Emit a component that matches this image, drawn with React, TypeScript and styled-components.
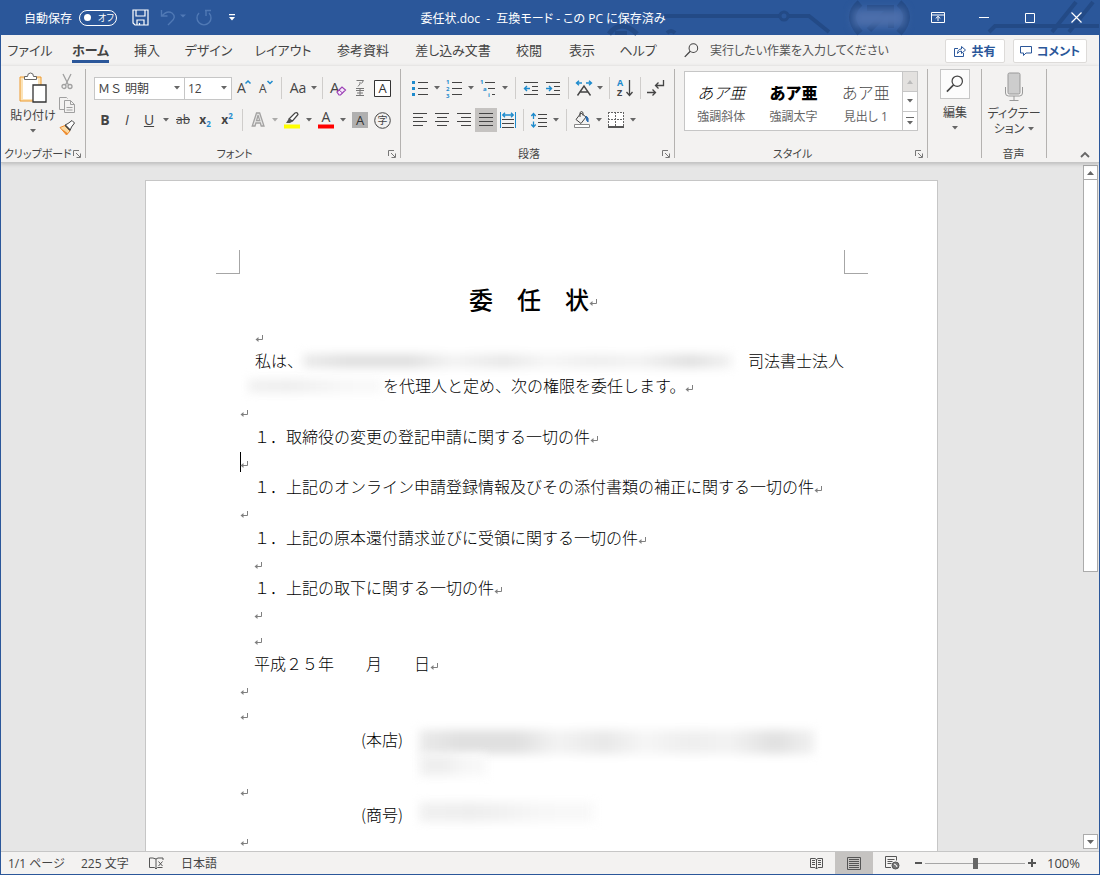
import React from 'react';
import styled, { createGlobalStyle, css } from 'styled-components';

const color = {
  brand: '#2b579a',
  brandDark: '#234a86',
  ribbon: '#f3f2f1',
  canvas: '#e6e6e6',
  line: '#c6c6c6',
  divider: '#b4b2b0',
  text: '#444444',
  accent: '#1e8bcd',
  pressed: '#c5c3c1',
};

const GlobalStyle = createGlobalStyle`
  *, *::before, *::after { box-sizing: border-box; }
  body { margin: 0; }
  body, button, input, select {
    font-family: "Open Sans", "Noto Sans CJK JP", sans-serif;
    font-size: 12px;
    color: ${color.text};
    font-feature-settings: "palt";
  }
  button { padding: 0; border: 0; background: none; }
  svg { display: block; flex: none; overflow: visible; }
`;

const Window = styled.div`
  display: flex;
  flex-direction: column;
  height: 100vh;
  border: 1px solid ${color.brand};
  border-top: 0;
  background: ${color.ribbon};
  overflow: hidden;
`;

/* ---------- title bar ---------- */

const TitleBar = styled.header`
  position: relative;
  display: grid;
  grid-template-columns: 1fr auto 1fr;
  align-items: center;
  flex: none;
  height: 35px;
  background: ${color.brand};
  color: #ffffff;
`;

const TitleArt = styled.svg`
  position: absolute;
  top: 0;
  right: 0;
`;

const QuickAccess = styled.div`
  display: flex;
  align-items: center;
  padding-left: 23px;
`;

const AutoSave = styled.label`
  display: flex;
  align-items: center;
  gap: 7px;
  margin-right: 11px;
`;

const Pill = styled.span`
  display: flex;
  align-items: center;
  gap: 7px;
  width: 38px;
  height: 16px;
  padding-left: 4px;
  border: 1px solid #ffffff;
  border-radius: 8px;
  font-size: 9px;
  line-height: 14px;
  white-space: nowrap;
`;

const PillDot = styled.input`
  appearance: none;
  width: 7px;
  height: 7px;
  margin: 0;
  border-radius: 50%;
  background: #ffffff;
`;

const QuickButton = styled.button<{ $width: number; $dim?: boolean }>`
  display: flex;
  align-items: center;
  justify-content: center;
  width: ${(p) => p.$width}px;
  height: 28px;
  color: ${(p) => (p.$dim ? '#5079b5' : '#ffffff')};
`;

const DocumentName = styled.h1`
  position: relative;
  margin: 0;
  padding-right: 14px;
  font-size: 12px;
  font-weight: 400;
  white-space: pre;
`;

const WindowControls = styled.div`
  position: relative;
  display: flex;
  align-items: center;
  justify-content: flex-end;
`;

const AccountBlur = styled.span`
  width: 52px;
  height: 18px;
  margin-right: 10px;
  background: #4d6fab;
  filter: blur(4px);
`;

const ControlButton = styled.button`
  display: flex;
  align-items: center;
  justify-content: center;
  width: 46px;
  height: 35px;
  color: #ffffff;
`;

/* ---------- tabs ---------- */

const TabBar = styled.nav`
  display: flex;
  align-items: center;
  flex: none;
  height: 31px;
  padding-right: 12px;
`;

const Tab = styled.button<{ $width: number; $active?: boolean }>`
  display: flex;
  justify-content: center;
  width: ${(p) => p.$width}px;
  height: 31px;
  font-size: 13px;
  line-height: 30px;
  white-space: nowrap;
  span { height: 28px; border-bottom: 3px solid transparent; }
  ${(p) =>
    p.$active &&
    css`
      font-weight: 700;
      span { border-bottom-color: ${color.brand}; }
    `}
`;

const TellMe = styled.label`
  display: flex;
  align-items: center;
  flex: 1;
  gap: 11px;
  padding-left: 15px;
`;

const TellMeInput = styled.input`
  flex: 1;
  min-width: 0;
  padding: 0;
  border: 0;
  background: none;
  line-height: 20px;
  outline: 0;
  &::placeholder { color: #555555; opacity: 1; }
`;

const ShareButton = styled.button<{ $width: number }>`
  display: flex;
  align-items: center;
  justify-content: center;
  gap: 5px;
  width: ${(p) => p.$width}px;
  height: 24px;
  margin-left: 8px;
  border: 1px solid #dddbd9;
  border-radius: 2px;
  background: #ffffff;
  color: ${color.brand};
  font-weight: 700;
  white-space: nowrap;
`;

/* ---------- ribbon ---------- */

const Ribbon = styled.div`
  position: relative;
  display: flex;
  flex: none;
  height: 97px;
  border-bottom: 1px solid ${color.line};
  box-shadow: 0 1px 4px rgba(0, 0, 0, 0.2);
`;

const GroupBox = styled.section<{ $width: number }>`
  display: flex;
  flex-direction: column;
  width: ${(p) => p.$width}px;
  margin: 3px 0 4px;
  padding-top: 3px;
  border-right: 1px solid ${color.divider};
`;

const GroupFooter = styled.div<{ $launcher?: boolean }>`
  display: flex;
  align-items: center;
  height: 16px;
  margin: auto 0 -4px;
  padding: 0 4px 0 3px;
  line-height: 16px;
  h2 {
    flex: 1;
    min-width: 0;
    margin: 0;
    padding-right: ${(p) => (p.$launcher ? 8 : 0)}px;
    font-size: 11px;
    font-weight: 400;
    text-align: center;
    white-space: nowrap;
  }
`;

const ToolRow = styled.div`
  display: flex;
  align-items: center;
  height: 32px;
  padding-left: 8px;
`;

const Tool = styled.button<{ $width?: number; $pressed?: boolean; $faded?: boolean }>`
  display: flex;
  align-items: center;
  width: ${(p) => p.$width ?? 22}px;
  height: 24px;
  background: ${(p) => (p.$pressed ? color.pressed : 'none')};
  opacity: ${(p) => (p.$faded ? 0.5 : 1)};
`;

const ToolFace = styled.span<{ $wide?: boolean }>`
  display: flex;
  align-items: center;
  justify-content: center;
  width: ${(p) => (p.$wide ? 24 : 22)}px;
  flex: none;
`;

const CaretSlot = styled.span`
  display: flex;
  flex: 1;
  justify-content: center;
`;

const ToolSeparator = styled.span`
  width: 1px;
  height: 22px;
  margin: 0 4px;
  background: #cfcdcb;
`;

const Letter = styled.span<{ $bold?: boolean; $italic?: boolean; $line?: string; $size?: number }>`
  font-family: "Open Sans", sans-serif;
  font-size: ${(p) => p.$size ?? 14}px;
  line-height: 18px;
  font-weight: ${(p) => (p.$bold ? 700 : 400)};
  font-style: ${(p) => (p.$italic ? 'italic' : 'normal')};
  text-decoration: ${(p) => p.$line ?? 'none'};
  sub, sup { color: ${color.accent}; font-size: 8px; line-height: 8px; }
`;

const ComboPair = styled.div`
  display: flex;
  margin-right: 2px;
`;

const Combo = styled.span<{ $width: number }>`
  display: grid;
  align-items: center;
  width: ${(p) => p.$width}px;
  height: 23px;
  margin-right: -1px;
  border: 1px solid ${color.line};
  background: #ffffff;
  > * { grid-area: 1 / 1; }
  > svg { justify-self: end; margin-right: 4px; pointer-events: none; }
`;

const ComboSelect = styled.select`
  appearance: none;
  width: 100%;
  height: 21px;
  padding: 0 3px;
  border: 0;
  background: none;
  font-feature-settings: normal;
`;

const ClipboardRow = styled.div`
  display: flex;
  padding-left: 6px;
`;

const BigButton = styled.button<{ $width: number }>`
  display: flex;
  flex-direction: column;
  align-items: center;
  width: ${(p) => p.$width}px;
  line-height: 15px;
  white-space: nowrap;
`;

const SmallColumn = styled.div`
  display: flex;
  flex-direction: column;
  margin-top: -2px;
  button { width: 16px; height: 23px; display: flex; align-items: center; justify-content: center; }
`;

const Gallery = styled.div`
  display: flex;
  height: 60px;
  margin: -1px 9px 0 9px;
  border: 1px solid ${color.line};
  background: #ffffff;
`;

const StyleCell = styled.button`
  display: flex;
  flex-direction: column;
  align-items: center;
  flex: 1;
  padding-top: 9px;
  color: #666666;
  line-height: 24px;
  white-space: nowrap;
`;

const StyleSample = styled.span<{ $kind: 'italic' | 'bold' | 'heading' }>`
  color: ${(p) => (p.$kind === 'heading' ? '#4a4a4a' : '#000000')};
  font-size: 16px;
  line-height: 24px;
  font-feature-settings: normal;
  font-style: ${(p) => (p.$kind === 'italic' ? 'italic' : 'normal')};
  font-weight: ${(p) => (p.$kind === 'bold' ? 900 : 300)};
`;

const GalleryScroll = styled.div`
  display: grid;
  grid-template-rows: 1fr 1fr 1fr;
  width: 15px;
  border-left: 1px solid ${color.line};
  button { display: flex; align-items: center; justify-content: center; }
  button + button { border-top: 1px solid ${color.line}; }
  button:first-child { background: #e3e1df; }
`;

const FindBox = styled.span`
  display: flex;
  align-items: center;
  justify-content: center;
  width: 30px;
  height: 30px;
  margin: -3px 0 6px;
  border: 1px solid ${color.line};
  background: #fcfcfc;
`;

const CaptionLine = styled.span`
  display: flex;
  align-items: center;
  gap: 4px;
  height: 15px;
`;

const BigFace = styled.span`
  display: flex;
  justify-content: center;
  margin-bottom: 4px;
`;

const CollapseCorner = styled.div`
  display: flex;
  flex: 1;
  align-items: flex-end;
  justify-content: flex-end;
  padding: 0 9px 4px;
`;

/* ---------- document ---------- */

const Workspace = styled.main`
  display: flex;
  flex: 1;
  min-height: 0;
  background: ${color.canvas};
`;

const Canvas = styled.div`
  flex: 1;
  min-width: 0;
  padding-top: 17px;
  overflow: hidden;
`;

const Page = styled.article`
  width: 793px;
  min-height: 1122px;
  margin: 0 auto;
  padding: 69px 69px 0 70px;
  border: 1px solid ${color.line};
  background: #ffffff;
  color: #000000;
`;

const CropMarks = styled.div`
  display: flex;
  justify-content: space-between;
  &::before, &::after {
    content: "";
    width: 24px;
    height: 24px;
    border: solid #a6a6a6;
    border-width: 0 1px 1px 0;
  }
  &::after { border-width: 0 0 1px 1px; }
`;

const TextArea = styled.div`
  display: grid;
  gap: 1px;
  padding: 0 24px;
  font-family: "Noto Sans CJK JP", sans-serif;
  font-size: 16px;
  font-weight: 300;
  font-feature-settings: normal;
`;

const DocTitle = styled.h2`
  display: flex;
  align-items: center;
  justify-content: center;
  margin: 10px 0 7px;
  padding-right: 17px;
  font-size: 24px;
  font-weight: 500;
  line-height: 32px;
  white-space: pre;
`;

const Line = styled.p<{ $indent?: number }>`
  display: flex;
  align-items: center;
  height: 25px;
  margin: 0;
  padding-left: ${(p) => p.$indent ?? 0}px;
  line-height: 25px;
  white-space: pre;
`;

const Caret = styled.span`
  width: 1px;
  height: 20px;
  margin-right: -1px;
  background: #000000;
`;

const ReturnMark = styled.svg`
  margin-top: 5px;
`;

const Redaction = styled.span<{ $width: number; $height: number; $soft?: boolean }>`
  width: ${(p) => p.$width}px;
  height: ${(p) => p.$height}px;
  background: ${(p) =>
    p.$soft
      ? 'linear-gradient(90deg, #f1f1f1, #eeeeee 30%, #f7f7f7 70%, #f9f9f9)'
      : 'linear-gradient(90deg, #ebebeb 0, #e0e0e0 10%, #e0e0e0 25%, #f3f3f3 35%, #e8e8e8 47%, #f6f6f6 57%, #eeeeee 68%, #f3f3f3 78%, #e0e0e0 90%, #f2f2f2)'};
  filter: blur(5px);
`;

const Party = styled.div<{ $rows: number }>`
  display: flex;
  gap: 16px;
  height: ${(p) => p.$rows * 25}px;
  padding-left: 121px;
`;

const PartyLines = styled.div`
  display: grid;
  align-content: start;
  padding-top: 3px;
`;

const ScrollBar = styled.div`
  display: flex;
  flex-direction: column;
  width: 17px;
  padding: 2px 1px;
  button {
    display: flex;
    align-items: center;
    justify-content: center;
    height: 15px;
    border: 1px solid #ababab;
    background: #ffffff;
  }
`;

const ScrollTrack = styled.div`
  flex: 1;
  &::before {
    content: "";
    display: block;
    height: 60%;
    border: 1px solid #ababab;
    border-top: 0;
    background: #ffffff;
  }
`;

/* ---------- status bar ---------- */

const StatusBar = styled.footer`
  display: flex;
  align-items: center;
  flex: none;
  height: 23px;
  padding: 0 17px 0 7px;
  border-top: 1px solid ${color.line};
  line-height: 20px;
  white-space: nowrap;
`;

const StatusItem = styled.button<{ $width: number }>`
  width: ${(p) => p.$width}px;
  text-align: left;
`;

const StatusSpacer = styled.span`
  flex: 1;
`;

const ViewButton = styled.button<{ $active?: boolean }>`
  display: flex;
  align-items: center;
  justify-content: center;
  width: 38px;
  height: 22px;
  background: ${(p) => (p.$active ? color.pressed : 'none')};
`;

const ZoomStep = styled.button`
  display: flex;
  align-items: center;
  justify-content: center;
  width: 14px;
  height: 20px;
`;

const ZoomSlider = styled.input`
  appearance: none;
  width: 100px;
  height: 12px;
  margin: 0;
  background: linear-gradient(#a6a6a6, #a6a6a6) center / 100% 1px no-repeat;
  &::-webkit-slider-thumb {
    appearance: none;
    width: 5px;
    height: 11px;
    background: #666666;
  }
`;

const ZoomValue = styled.button`
  width: 43px;
  padding-left: 8px;
  font-size: 13px;
  text-align: left;
`;

/* ---------- drawings ---------- */

const Down = () => (
  <svg width="6" height="4" viewBox="0 0 6 4"><path d="M0 0h6L3 3.4z" fill="#666" /></svg>
);

const Launcher = () => (
  <svg width="8" height="8" viewBox="0 0 8 8" fill="none" stroke="#777">
    <path d="M.5 6V.5H6M3 3l4 4M7.5 3.5v4h-4" />
  </svg>
);

const Return = () => (
  <ReturnMark width="9" height="9" viewBox="0 0 9 9" fill="none" stroke="#808080">
    <path d="M7.5 1v4.5H2" />
    <path d="M3.500 3v5L.5 5.500z" fill="#808080" stroke="none" />
  </ReturnMark>
);

const Magnifier = ({ size = 16 }: { size?: number }) => (
  <svg width={size} height={size} viewBox="0 0 16 16" fill="none" stroke="#444" strokeWidth="1.1">
    <circle cx="10" cy="5.500" r="4.600" />
    <path d="M6.700 8.800L.8 14.800" strokeWidth="1.400" />
  </svg>
);

type Bar = [number, number, number];
const Bars = ({ rows, children }: { rows: Bar[]; children?: React.ReactNode }) => (
  <svg width="16" height="16" viewBox="0 0 16 16" fill="none" stroke="#444">
    {rows.map(([x, y, w]) => <path key={`${x}-${y}`} d={`M${x} ${y}.5h${w}`} />)}
    {children}
  </svg>
);

const iconText = { fontFamily: '"Open Sans", sans-serif', fontWeight: 700, fill: color.accent, stroke: 'none' };

const Bullets = () => (
  <Bars rows={[[6, 2, 10], [6, 8, 10], [6, 14, 10]]}>
    <path d="M0 1h3v3H0zM0 7h3v3H0zM0 13h3v3H0z" fill={color.accent} stroke="none" />
  </Bars>
);
const Numbers = () => (
  <Bars rows={[[6, 2, 10], [6, 8, 10], [6, 14, 10]]}>
    <g fontSize="6" {...iconText}><text x="0" y="4">1</text><text x="0" y="11">2</text><text x="0" y="18">3</text></g>
  </Bars>
);
const MultiLevel = () => (
  <Bars rows={[[5, 2, 10], [8, 8, 7], [12, 14, 3]]}>
    <g fontSize="6" {...iconText}><text x="0" y="4">1</text><text x="3" y="11">a</text><text x="8" y="17">i</text></g>
  </Bars>
);
const IndentIcon = ({ outward }: { outward?: boolean }) => (
  <Bars rows={[[1, 2, 14], [9, 6, 6], [9, 10, 6], [1, 14, 14]]}>
    <path d={outward ? 'M7 8.500H1.500M4 6L1.500 8.500L4 11' : 'M1 8.500h5.500M4 6l2.500 2.500L4 11'} stroke={color.accent} strokeWidth="1.400" />
  </Bars>
);
const ScaleIcon = () => (
  <svg width="18" height="16" viewBox="0 0 18 16" fill="none" stroke="#444" strokeWidth="1.400">
    <path d="M2.500 15.500L9 6l6.500 9.500M5 12h8" />
    <path d="M7 3H1.500M4 .7L1.500 3L4 5.300M11 3h5.500M14 .7L16.500 3L14 5.300" stroke={color.accent} />
  </svg>
);
const SortIcon = () => (
  <svg width="18" height="18" viewBox="0 0 18 18" fill="none" stroke="#444" strokeWidth="1.300">
    <g fontSize="9" {...iconText}><text x="1" y="7">A</text><text x="1" y="17" fill="#444">Z</text></g>
    <path d="M13.500 1v15M10.500 13l3 3.500l3-3.500" />
  </svg>
);
const MarksIcon = () => (
  <svg width="18" height="16" viewBox="0 0 18 16" fill="none" stroke="#444" strokeWidth="1.300">
    <path d="M16.500 0v5.500H9M11.500 2.500L8.500 5.500l3 3M0 12.500h8M5.500 9.500l3 3l-3 3" />
  </svg>
);
const DistributeIcon = () => (
  <Bars rows={[[2, 7, 12], [2, 11, 12], [2, 15, 12]]}>
    <path d="M.5 0v16M15.500 0v16" stroke={color.accent} />
    <path d="M3 3h10M5 .7L2.700 3L5 5.300M11 .7L13.300 3L11 5.300" stroke={color.accent} strokeWidth="1.300" />
  </Bars>
);
const SpacingIcon = () => (
  <Bars rows={[[7, 2, 9], [7, 6, 9], [7, 10, 9], [7, 14, 9]]}>
    <path d="M2.500 1.500v5.500M.3 4l2.200-2.500L4.700 4M2.500 9.500V15M.3 12.500L2.500 15l2.200-2.500" stroke={color.accent} strokeWidth="1.300" />
  </Bars>
);
const BucketIcon = () => (
  <svg width="18" height="18" viewBox="0 0 18 18" fill="none" stroke="#444">
    <path d="M8 2L3 8.500l5 4l5-6.500zM7 6V1.500q1.500-2 3 0V4.500" />
    <path d="M13 5q3 1 2 6q-2-1-2-6z" fill="#2b6cb0" stroke="#2b6cb0" />
    <path d="M1.500 13.500h15v3h-15z" stroke="#888" fill="#fff" />
  </svg>
);
const BordersIcon = () => (
  <svg width="16" height="16" viewBox="0 0 16 16" fill="none" stroke="#666">
    <path d="M.5.500h15v13.500H.5z" fill="#fff" stroke="none" />
    <path d="M.5 0v14M15.500 0v14M7.500 0v14M0 .5h16M0 7.500h16" strokeDasharray="2 1" />
    <path d="M0 15h16" stroke="#222" strokeWidth="1.500" />
  </svg>
);

const PasteIcon = () => (
  <svg width="28" height="32" viewBox="0 0 28 32" fill="none">
    <path d="M1 5h21v24H1z" fill="#fbe3b8" stroke="#ee9a2d" />
    <path d="M4 7h15v20H4z" fill="#fff" />
    <path d="M5.500 7.500v-3h3q0-3.500 3-3.500t3 3.500h3v3z" fill="#fff" stroke="#666" />
    <path d="M14 13h13v17H14z" fill="#fff" stroke="#333" strokeWidth="1.300" />
  </svg>
);
const CutIcon = () => (
  <svg width="12" height="16" viewBox="0 0 12 16" fill="none" stroke="#a0a0a0" strokeWidth="1.300">
    <path d="M2 0l5.500 11M10 0L4.500 11" />
    <circle cx="3" cy="12.500" r="2" /><circle cx="9" cy="12.500" r="2" />
  </svg>
);
const CopyIcon = () => (
  <svg width="16" height="16" viewBox="0 0 16 16" fill="none" stroke="#a0a0a0">
    <path d="M5 12.500H.5V.5h7l1 1M5.500 3.500h6l4 4v8h-10zM11.500 3.500v4h4M7.500 10.500h6M7.500 13h6" />
  </svg>
);
const BrushIcon = () => (
  <svg width="16" height="16" viewBox="0 0 16 16">
    <path d="M1 7.500l5-2l5 5.500l-3.500 4z" fill="#fbd9a0" stroke="#ee8a2d" />
    <path d="M3 9l6 4.500L7.500 15z" fill="#ee8a2d" />
    <path d="M6 5l3-1.500l4-3L15.500 3l-3 4L11 10.500z" fill="#fff" stroke="#444" />
    <path d="M6.500 5.500l4.500 4.500" stroke="#444" strokeWidth="1.600" />
  </svg>
);
const ResizeLetter = ({ up }: { up?: boolean }) => (
  <svg width="16" height="20" viewBox="0 0 16 20">
    <text x="1" y="15" fontSize={up ? 14 : 12} fontFamily='"Open Sans", sans-serif' fill="#444">A</text>
    <path d={up ? 'M9.500 5.500L12 3l2.500 2.500' : 'M9.500 3L12 5.500L14.500 3'} stroke={color.accent} strokeWidth="1.500" fill="none" />
  </svg>
);
const ClearIcon = () => (
  <svg width="18" height="20" viewBox="0 0 18 20">
    <text x="1" y="15" fontSize="15" fontFamily='"Open Sans", sans-serif' fill="#444">A</text>
    <path d="M8 14l5-5l3.500 3l-5 5H10z" fill="#f6eafa" stroke="#9b3fb5" strokeWidth="1.200" />
    <path d="M10 12l3.500 3" stroke="#9b3fb5" />
  </svg>
);
const RubyIcon = () => (
  <svg width="14" height="18" viewBox="0 0 14 18" fill="none" stroke="#777">
    <path d="M3.500 1.500h7l-2 3M7 3v2l-2 2.500M3 9.500h8M3 11.500h8M4 14h6M3 16.500h8M7 9v8" />
  </svg>
);
const BoxedA = () => (
  <svg width="17" height="17" viewBox="0 0 17 17">
    <path d="M.5.5h16v16H.5z" fill="#fff" stroke="#333" />
    <text x="8.500" y="13" fontSize="13" textAnchor="middle" fontFamily='"Open Sans", sans-serif' fill="#333">A</text>
  </svg>
);
const ShadedA = () => (
  <svg width="16" height="16" viewBox="0 0 16 16">
    <path d="M0 0h16v16H0z" fill="#b0b0b0" />
    <text x="8" y="13" fontSize="13" textAnchor="middle" fontFamily='"Open Sans", sans-serif' fill="#333">A</text>
  </svg>
);
const CircledChar = () => (
  <svg width="17" height="17" viewBox="0 0 17 17">
    <circle cx="8.500" cy="8.500" r="7.800" fill="none" stroke="#444" />
    <text x="8.500" y="12" fontSize="10" textAnchor="middle" fontFamily='"Noto Sans CJK JP", sans-serif' fill="#444">字</text>
  </svg>
);
const OutlineA = () => (
  <svg width="16" height="20" viewBox="0 0 16 20">
    <text x="8" y="16" fontSize="17" fontWeight="700" textAnchor="middle" fontFamily='"Open Sans", sans-serif' fill="#ddd" stroke="#555" strokeWidth="1.300">A</text>
  </svg>
);
const Highlighter = () => (
  <svg width="17" height="18" viewBox="0 0 17 18">
    <path d="M5 8l6-6q2.500-1 3 1.500L8.500 10z" fill="#fff" stroke="#444" strokeWidth="1.200" />
    <path d="M5 7.500l3.500 3L6 12H2z" fill="#555" />
    <path d="M0 13.500h16v4H0z" fill="#ffff00" />
  </svg>
);
const FontColor = () => (
  <svg width="16" height="18" viewBox="0 0 16 18">
    <text x="8" y="11" fontSize="14" textAnchor="middle" fontFamily='"Open Sans", sans-serif' fill="#444">A</text>
    <path d="M0 13.500h16v4H0z" fill="#ff0000" />
  </svg>
);
const MicIcon = () => (
  <svg width="20" height="30" viewBox="0 0 20 30" fill="none" stroke="#999">
    <rect x="4" y="1" width="12" height="21" rx="1.500" fill="#cdcdcd" />
    <path d="M1.500 15v6q0 3 3 3h11q3 0 3-3v-6M10 24v4M5.500 28.500h9" />
  </svg>
);

/* ---------- pieces ---------- */

const Group = ({ title, width, launcher, children }: {
  title?: string; width: number; launcher?: boolean; children: React.ReactNode;
}) => (
  <GroupBox $width={width}>
    {children}
    {title && (
      <GroupFooter $launcher={launcher}>
        <h2>{title}</h2>
        {launcher && <button aria-label={`${title}の設定`}><Launcher /></button>}
      </GroupFooter>
    )}
  </GroupBox>
);

const SplitTool = ({ label, width = 34, faded, wide, children }: {
  label: string; width?: number; faded?: boolean; wide?: boolean; children: React.ReactNode;
}) => (
  <Tool aria-label={label} $width={width} $faded={faded}>
    <ToolFace $wide={wide}>{children}</ToolFace>
    <CaretSlot><Down /></CaretSlot>
  </Tool>
);

const PlainTool = ({ label, pressed, children }: {
  label: string; pressed?: boolean; children: React.ReactNode;
}) => (
  <Tool aria-label={label} $pressed={pressed}><ToolFace>{children}</ToolFace></Tool>
);

const tabs: [string, number][] = [
  ['ファイル', 58], ['ホーム', 63], ['挿入', 50], ['デザイン', 73], ['レイアウト', 76],
  ['参考資料', 84], ['差し込み文書', 96], ['校閲', 56], ['表示', 50], ['ヘルプ', 62],
];

const Header = () => (
  <TitleBar>
    <TitleArt width="520" height="35" viewBox="580 0 520 35" fill="none" stroke={color.brandDark} strokeWidth="4">
      <path d="M665 16h116M790 16h20l20 16" />
      <circle cx="785" cy="16" r="4" strokeWidth="3" />
      <path d="M610 34q12-16 28 0" strokeWidth="5" />
      <path d="M616 33h12M668 33q4-4 8 0" />
      <path d="M861 3q-15 13 0 30M900 3q15 13 0 30" strokeWidth="7" />
      <path d="M868 8h24v20M890 10l-20 20" strokeWidth="6" />
      <path d="M990 32l6-6h104M1053 32l24-30M1070 32l24-30" />
    </TitleArt>
    <QuickAccess>
      <AutoSave>
        自動保存
        <Pill><PillDot type="checkbox" />オフ</Pill>
      </AutoSave>
      <QuickButton $width={24} aria-label="上書き保存">
        <svg width="17" height="17" viewBox="0 0 17 17" fill="none" stroke="currentColor" strokeWidth="1.200">
          <path d="M1 1h15v15H3l-2-2zM4 1v6h9V1M5 16v-5h7v5M7.500 16v-2" />
        </svg>
      </QuickButton>
      <QuickButton $width={42} $dim aria-label="元に戻す">
        <svg width="26" height="17" viewBox="0 0 26 17" fill="none" stroke="currentColor" strokeWidth="1.400">
          <path d="M1.500 1v6h6M2 7q5-6 10-3q5 4-1 9l-3 3" />
          <path d="M20 5.500h6l-3 3z" fill="currentColor" stroke="none" />
        </svg>
      </QuickButton>
      <QuickButton $width={20} $dim aria-label="繰り返し">
        <svg width="18" height="17" viewBox="0 0 18 17" fill="none" stroke="currentColor" strokeWidth="1.400">
          <path d="M4 4a7 7 0 1 0 10 0M10 1.500h6M11 1v6" />
        </svg>
      </QuickButton>
      <QuickButton $width={36} aria-label="クイック アクセス ツール バーのカスタマイズ">
        <svg width="6" height="7" viewBox="0 0 6 7" fill="currentColor"><path d="M0 0h6v1.200H0zM0 3h6L3 6.400z" /></svg>
      </QuickButton>
    </QuickAccess>
    <DocumentName>{'委任状.doc  -  互換モード - この PC に保存済み'}</DocumentName>
    <WindowControls>
      <AccountBlur />
      <ControlButton aria-label="リボンの表示オプション">
        <svg width="14" height="11" viewBox="0 0 14 11" fill="none" stroke="currentColor">
          <path d="M.5.5h13v10H.5zM.5 3h13M7 9V4.500M4.700 6.500L7 4.300l2.300 2.200" />
        </svg>
      </ControlButton>
      <ControlButton aria-label="最小化">
        <svg width="10" height="1"><path d="M0 .5h10" stroke="currentColor" /></svg>
      </ControlButton>
      <ControlButton aria-label="最大化">
        <svg width="10" height="10"><path d="M.5.5h9v9h-9z" stroke="currentColor" fill="none" /></svg>
      </ControlButton>
      <ControlButton aria-label="閉じる">
        <svg width="11" height="11"><path d="M.5.5l10 10M10.500.5l-10 10" stroke="currentColor" strokeWidth="1.200" /></svg>
      </ControlButton>
    </WindowControls>
  </TitleBar>
);

const Tabs = () => (
  <TabBar>
    {tabs.map(([name, width]) => (
      <Tab key={name} $width={width} $active={name === 'ホーム'}><span>{name}</span></Tab>
    ))}
    <TellMe>
      <Magnifier size={15} />
      <TellMeInput aria-label="操作アシスト" placeholder="実行したい作業を入力してください" />
    </TellMe>
    <ShareButton $width={60}>
      <svg width="12" height="12" viewBox="0 0 12 12" fill="none" stroke="currentColor">
        <path d="M4 3.500H.5v8h9V8M3.500 8.500q0-4.500 4-4.500V1.500l4 3.500l-4 3.500V6q-2.500 0-4 2.500z" />
      </svg>
      共有
    </ShareButton>
    <ShareButton $width={74}>
      <svg width="12" height="12" viewBox="0 0 12 12" fill="none" stroke="currentColor">
        <path d="M.5 1.500h11v6.500H6L3.500 10.500V8h-3z" />
      </svg>
      コメント
    </ShareButton>
  </TabBar>
);

const FontGroup = () => (
  <Group title="フォント" width={315} launcher>
    <ToolRow>
      <ComboPair>
        <Combo $width={91}>
          <ComboSelect aria-label="フォント"><option>ＭＳ 明朝</option></ComboSelect>
          <Down />
        </Combo>
        <Combo $width={48}>
          <ComboSelect aria-label="フォント サイズ"><option>12</option></ComboSelect>
          <Down />
        </Combo>
      </ComboPair>
      <PlainTool label="フォント サイズの拡大"><ResizeLetter up /></PlainTool>
      <PlainTool label="フォント サイズの縮小"><ResizeLetter /></PlainTool>
      <ToolSeparator />
      <SplitTool label="文字種の変換" width={32} wide><Letter>Aa</Letter></SplitTool>
      <ToolSeparator />
      <PlainTool label="すべての書式をクリア"><ClearIcon /></PlainTool>
      <PlainTool label="ルビ"><RubyIcon /></PlainTool>
      <PlainTool label="囲み線"><BoxedA /></PlainTool>
    </ToolRow>
    <ToolRow>
      <PlainTool label="太字"><Letter $bold>B</Letter></PlainTool>
      <PlainTool label="斜体"><Letter $italic>I</Letter></PlainTool>
      <SplitTool label="下線"><Letter $line="underline">U</Letter></SplitTool>
      <PlainTool label="取り消し線"><Letter $line="line-through" $size={12}>ab</Letter></PlainTool>
      <PlainTool label="下付き"><Letter $bold $size={12}>x<sub>2</sub></Letter></PlainTool>
      <PlainTool label="上付き"><Letter $bold $size={12}>x<sup>2</sup></Letter></PlainTool>
      <ToolSeparator />
      <SplitTool label="文字の効果" faded><OutlineA /></SplitTool>
      <SplitTool label="蛍光ペンの色"><Highlighter /></SplitTool>
      <SplitTool label="フォントの色"><FontColor /></SplitTool>
      <PlainTool label="文字の網かけ"><ShadedA /></PlainTool>
      <PlainTool label="囲い文字"><CircledChar /></PlainTool>
    </ToolRow>
  </Group>
);

const ParagraphGroup = () => (
  <Group title="段落" width={274} launcher>
    <ToolRow>
      <SplitTool label="箇条書き"><Bullets /></SplitTool>
      <SplitTool label="段落番号"><Numbers /></SplitTool>
      <SplitTool label="アウトライン"><MultiLevel /></SplitTool>
      <ToolSeparator />
      <PlainTool label="インデントを減らす"><IndentIcon outward /></PlainTool>
      <PlainTool label="インデントを増やす"><IndentIcon /></PlainTool>
      <ToolSeparator />
      <SplitTool label="拡張書式" width={32}><ScaleIcon /></SplitTool>
      <ToolSeparator />
      <PlainTool label="並べ替え"><SortIcon /></PlainTool>
      <ToolSeparator />
      <PlainTool label="編集記号の表示"><MarksIcon /></PlainTool>
    </ToolRow>
    <ToolRow>
      <PlainTool label="左揃え"><Bars rows={[[1, 1, 14], [1, 5, 10], [1, 9, 14], [1, 13, 10]]} /></PlainTool>
      <PlainTool label="中央揃え"><Bars rows={[[1, 1, 14], [3, 5, 10], [1, 9, 14], [3, 13, 10]]} /></PlainTool>
      <PlainTool label="右揃え"><Bars rows={[[1, 1, 14], [5, 5, 10], [1, 9, 14], [5, 13, 10]]} /></PlainTool>
      <PlainTool label="両端揃え" pressed><Bars rows={[[1, 1, 14], [1, 5, 14], [1, 9, 14], [1, 13, 14]]} /></PlainTool>
      <PlainTool label="均等割り付け"><DistributeIcon /></PlainTool>
      <ToolSeparator />
      <SplitTool label="行間"><SpacingIcon /></SplitTool>
      <ToolSeparator />
      <SplitTool label="塗りつぶし"><BucketIcon /></SplitTool>
      <SplitTool label="罫線"><BordersIcon /></SplitTool>
    </ToolRow>
  </Group>
);

const RibbonBar = () => (
  <Ribbon>
    <Group title="クリップボード" width={85} launcher>
      <ClipboardRow>
        <BigButton $width={52}>
          <BigFace><PasteIcon /></BigFace>
          <CaptionLine>貼り付け</CaptionLine>
          <CaptionLine><Down /></CaptionLine>
        </BigButton>
        <SmallColumn>
          <button aria-label="切り取り"><CutIcon /></button>
          <button aria-label="コピー"><CopyIcon /></button>
          <button aria-label="書式のコピー"><BrushIcon /></button>
        </SmallColumn>
      </ClipboardRow>
    </Group>
    <FontGroup />
    <ParagraphGroup />
    <Group title="スタイル" width={253} launcher>
      <Gallery>
        <StyleCell><StyleSample $kind="italic">あア亜</StyleSample>強調斜体</StyleCell>
        <StyleCell><StyleSample $kind="bold">あア亜</StyleSample>強調太字</StyleCell>
        <StyleCell><StyleSample $kind="heading">あア亜</StyleSample>見出し 1</StyleCell>
        <GalleryScroll>
          <button aria-label="上へ"><svg width="6" height="4"><path d="M0 4h6L3 0z" fill="#bbb" /></svg></button>
          <button aria-label="下へ"><Down /></button>
          <button aria-label="その他">
            <svg width="8" height="8" fill="#666"><path d="M0 0h8v1H0zM1 4h6L4 7.400z" /></svg>
          </button>
        </GalleryScroll>
      </Gallery>
    </Group>
    <Group width={54}>
      <BigButton $width={54}>
        <FindBox><Magnifier size={18} /></FindBox>
        編集
        <CaptionLine><Down /></CaptionLine>
      </BigButton>
    </Group>
    <Group title="音声" width={65}>
      <BigButton $width={64}>
        <BigFace><MicIcon /></BigFace>
        <CaptionLine>ディクテー</CaptionLine>
        <CaptionLine>ション <Down /></CaptionLine>
      </BigButton>
    </Group>
    <CollapseCorner>
      <button aria-label="リボンを折りたたむ">
        <svg width="10" height="7" fill="none" stroke="#666" strokeWidth="1.800"><path d="M1 6l4-4l4 4" /></svg>
      </button>
    </CollapseCorner>
  </Ribbon>
);

const DocumentPage = () => (
  <Page>
    <CropMarks />
    <DocTitle>委　任　状<Return /></DocTitle>
    <TextArea>
      <section>
        <Line $indent={15}><Return /></Line>
        <Line $indent={15}>私は、<Redaction $width={429} $height={14} />　司法書士法人</Line>
        <Line $indent={8}><Redaction $width={135} $height={14} $soft />を代理人と定め、次の権限を委任します。<Return /></Line>
        <Line><Return /></Line>
      </section>
      <section>
        <Line $indent={14}>１．取締役の変更の登記申請に関する一切の件<Return /></Line>
        <Line><Caret /><Return /></Line>
        <Line $indent={14}>１．上記のオンライン申請登録情報及びその添付書類の補正に関する一切の件<Return /></Line>
        <Line><Return /></Line>
      </section>
      <section>
        <Line $indent={14}>１．上記の原本還付請求並びに受領に関する一切の件<Return /></Line>
        <Line $indent={14}><Return /></Line>
        <Line $indent={14}>１．上記の取下に関する一切の件<Return /></Line>
        <Line $indent={14}><Return /></Line>
      </section>
      <section>
        <Line $indent={14}><Return /></Line>
        <Line $indent={14}>平成２５年　　月　　日<Return /></Line>
        <Line><Return /></Line>
        <Line><Return /></Line>
      </section>
      <section>
        <Party $rows={2}>
          <Line>(本店)</Line>
          <PartyLines>
            <Redaction $width={396} $height={24} />
            <Redaction $width={68} $height={22} $soft />
          </PartyLines>
        </Party>
        <Line><Return /></Line>
        <Party $rows={1}>
          <Line>(商号)</Line>
          <Redaction $width={176} $height={20} $soft />
        </Party>
        <Line><Return /></Line>
      </section>
    </TextArea>
  </Page>
);

const Status = () => (
  <StatusBar>
    <StatusItem $width={73}>1/1 ページ</StatusItem>
    <StatusItem $width={68}>225 文字</StatusItem>
    <StatusItem $width={32} aria-label="文章校正">
      <svg width="15" height="13" viewBox="0 0 15 13" fill="none" stroke="#555">
        <path d="M7 2Q4 .500 .500 1v9.500h5L7 12l1.500-1.500h5M7 2v10M7 2l2-1h5v2M9.500 4.500l4 4.500M13.500 4.500l-4 4.500" />
      </svg>
    </StatusItem>
    <StatusItem $width={60}>日本語</StatusItem>
    <StatusSpacer />
    <ViewButton aria-label="閲覧モード">
      <svg width="13" height="13" viewBox="0 0 13 13" fill="none" stroke="#555">
        <path d="M.5 1.500H5L6.500 2.500L8 1.500h4.500v9H8L6.500 12L5 10.500H.5zM6.500 2v10M2 3.500h3M2 5.500h3M2 7.500h3M8 3.500h3M8 5.500h3M8 7.500h3" />
      </svg>
    </ViewButton>
    <ViewButton $active aria-label="印刷レイアウト">
      <svg width="14" height="13" viewBox="0 0 14 13" fill="none" stroke="#555">
        <path d="M.5.5h13v12H.5zM2 2.500h10M2 4.500h10M2 6.500h10M2 8.500h10M2 10.500h10" />
      </svg>
    </ViewButton>
    <ViewButton aria-label="Web レイアウト">
      <svg width="15" height="14" viewBox="0 0 15 14" fill="none" stroke="#555">
        <path d="M6 11.500H.5V.5h11v4M2.500 3.500h7M2.500 5.500h5M2.500 7.500h4" />
        <circle cx="10.500" cy="9.500" r="3.500" fill="#777" />
        <path d="M9 8l2 1l1 2" stroke="#fff" />
      </svg>
    </ViewButton>
    <ZoomStep aria-label="縮小"><svg width="7" height="2"><path d="M0 0h7v2H0z" fill="#555" /></svg></ZoomStep>
    <ZoomSlider type="range" aria-label="ズーム" min={0} max={100} defaultValue={50} />
    <ZoomStep aria-label="拡大"><svg width="8" height="8"><path d="M3 0h2v3h3v2H5v3H3V5H0V3h3z" fill="#555" /></svg></ZoomStep>
    <ZoomValue>100%</ZoomValue>
  </StatusBar>
);

export default function App() {
  return (
    <Window>
      <GlobalStyle />
      <Header />
      <Tabs />
      <RibbonBar />
      <Workspace>
        <Canvas><DocumentPage /></Canvas>
        <ScrollBar>
          <button aria-label="上へスクロール"><svg width="7" height="4"><path d="M0 4h7L3.500 0z" fill="#666" /></svg></button>
          <ScrollTrack />
          <button aria-label="下へスクロール"><svg width="7" height="4"><path d="M0 0h7L3.500 4z" fill="#666" /></svg></button>
        </ScrollBar>
      </Workspace>
      <Status />
    </Window>
  );
}
